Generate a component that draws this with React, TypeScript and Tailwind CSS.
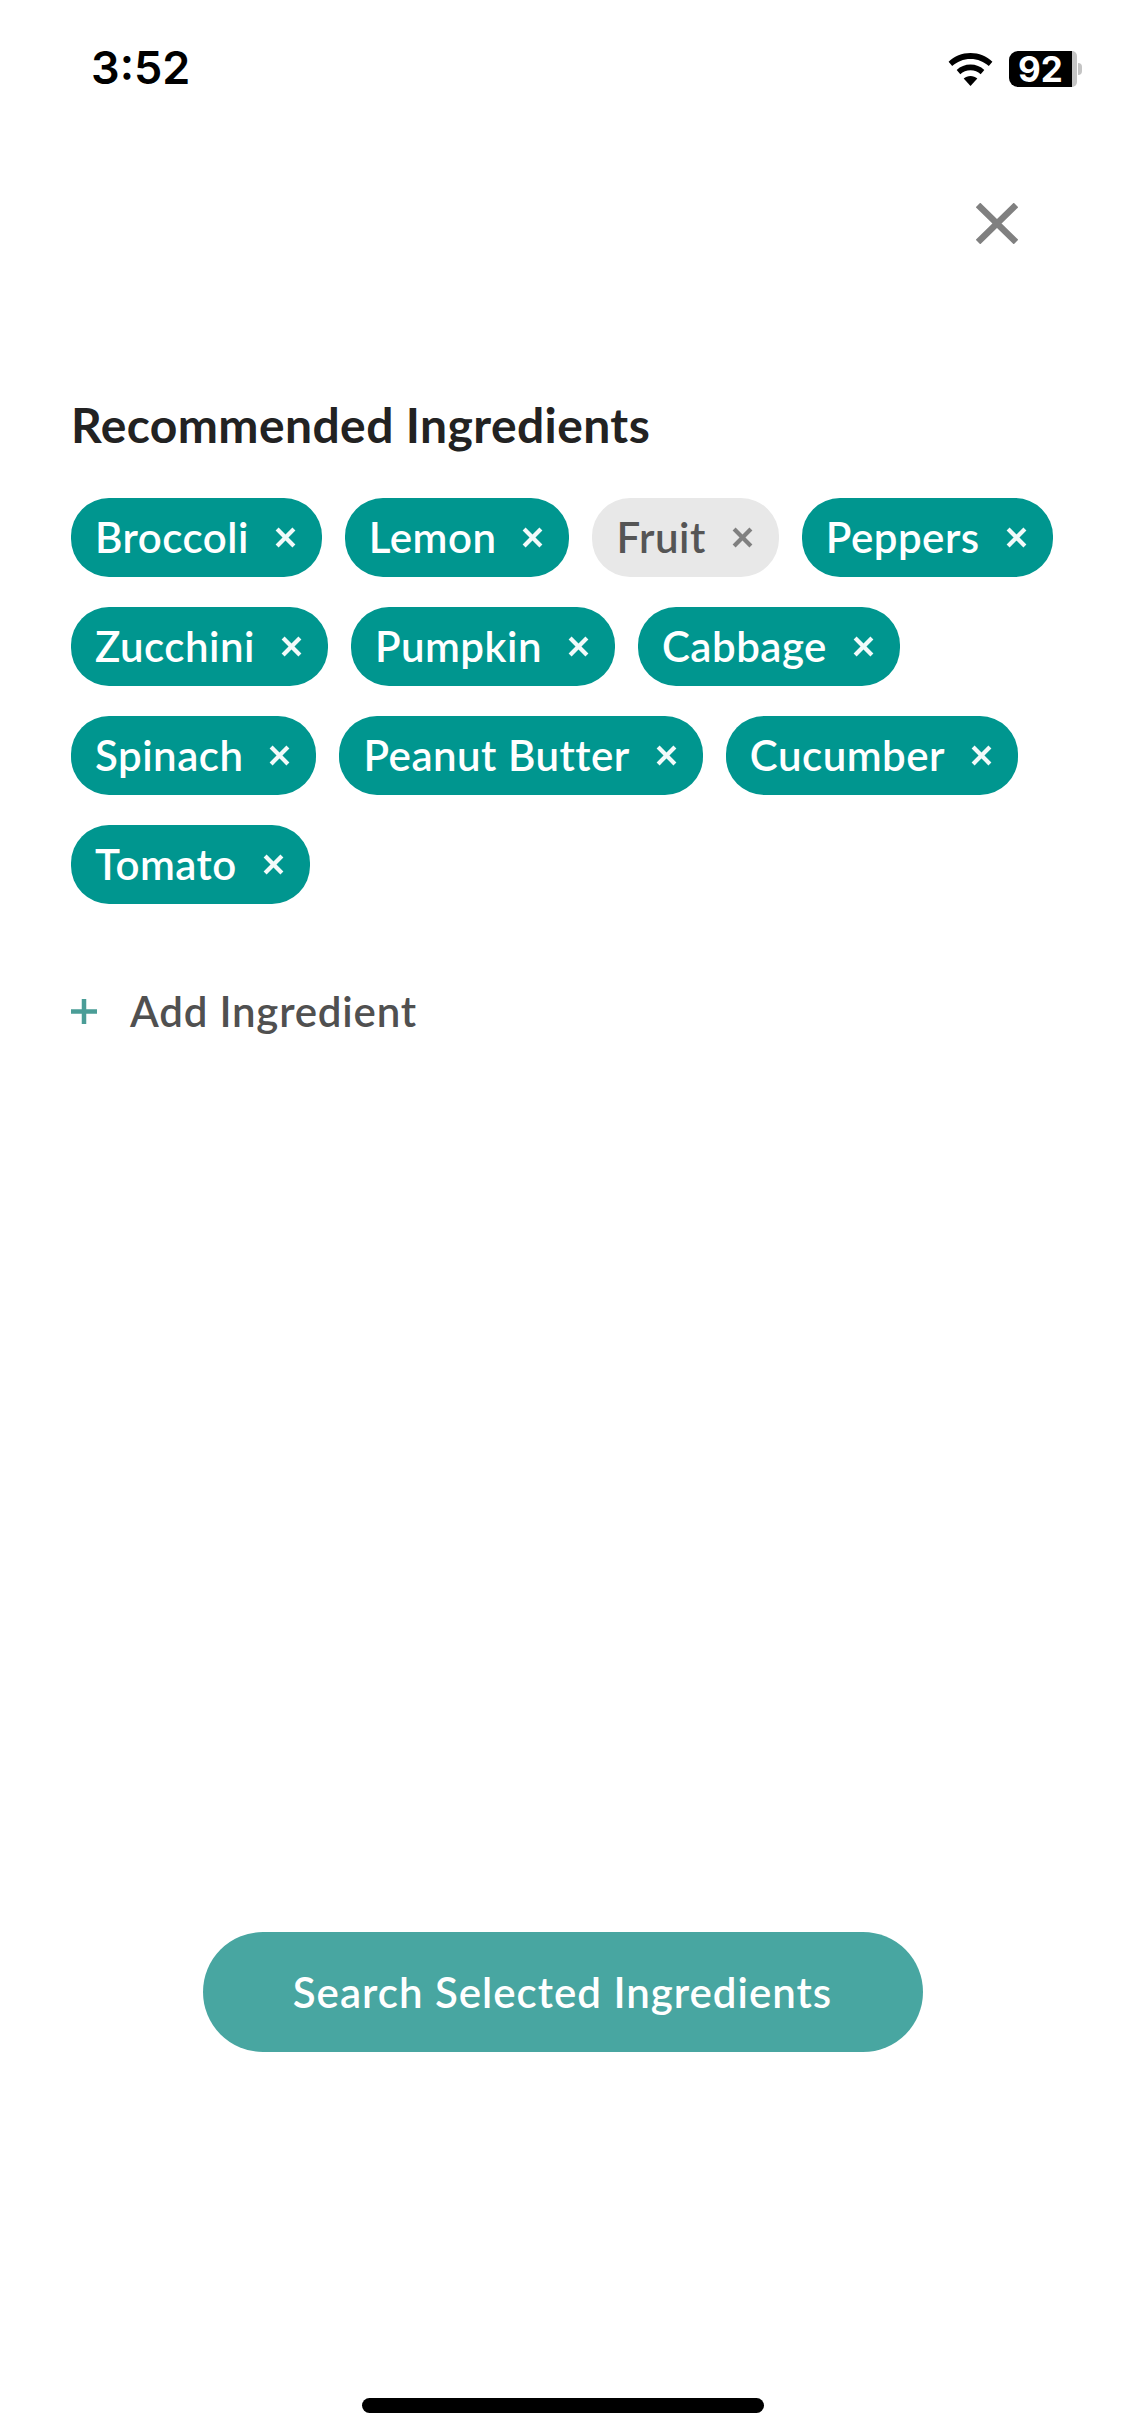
const ingredients = [
  { name: "Broccoli", on: true },
  { name: "Lemon", on: true },
  { name: "Fruit", on: false },
  { name: "Peppers", on: true },
  { name: "Zucchini", on: true },
  { name: "Pumpkin", on: true },
  { name: "Cabbage", on: true },
  { name: "Spinach", on: true },
  { name: "Peanut Butter", on: true },
  { name: "Cucumber", on: true },
  { name: "Tomato", on: true },
]

function Cross({ className }: { className: string }) {
  return (
    <svg className={className} viewBox="0 0 20 20" fill="none" stroke="currentColor" strokeWidth={4}>
      <path d="M2 2L18 18M18 2L2 18" />
    </svg>
  )
}

function Chip({ name, on }: { name: string; on: boolean }) {
  return (
    <div
      className={`flex h-[79px] items-center rounded-[38px] pl-6 pr-[26px] text-[42px] font-semibold tracking-[0.5px] ${
        on ? "bg-[#00968f] text-white" : "bg-[#e8e8e8] text-[#555555]"
      }`}
    >
      <span className="pb-[2px] leading-none">{name}</span>
      <Cross className={`ml-[26px] h-[21px] w-[21px] ${on ? "text-[#f2fafa]" : "text-[#808080]"}`} />
    </div>
  )
}

export default function App() {
  return (
    <div className="flex h-[2436px] w-[1125px] flex-col bg-white font-['Lato',sans-serif]">
      {/* status bar */}
      <div className="flex h-[136px] items-start justify-between pl-[91px] pr-[43px] pt-[41px]">
        <span className="font-['Inter',sans-serif] text-[45px] font-semibold leading-[54px] text-black">3:52</span>
        <div className="flex items-center gap-4 pt-[10px]">
          <svg className="h-[33px] w-[45px]" viewBox="0 0 45 33" fill="black">
            <path d="M22.5 0C14 0 6.4 3.3 0.6 8.7L4.2 13C9 8.6 15.4 5.9 22.5 5.9S36 8.6 40.8 13L44.4 8.7C38.6 3.3 31 0 22.5 0Z" />
            <path d="M22.5 11.5C17.2 11.5 12.4 13.5 8.7 16.9L12.3 21.2C15 18.8 18.6 17.3 22.5 17.3S30 18.8 32.7 21.2L36.3 16.9C32.6 13.5 27.8 11.5 22.5 11.5Z" />
            <path d="M22.5 23C19.9 23 17.5 24 15.7 25.5L22.5 33L29.3 25.5C27.5 24 25.1 23 22.5 23Z" />
          </svg>
          <div className="flex items-center">
            <div className="flex h-9 w-[63px] items-center justify-center rounded-l-[9px] bg-black font-['Inter',sans-serif] text-[35px] font-bold leading-none text-white">
              92
            </div>
            <div className="h-9 w-[5px] rounded-r-[9px] bg-[#c4c4c4]" />
            <div className="ml-px h-3 w-1 rounded-r-full bg-[#c4c4c4]" />
          </div>
        </div>
      </div>

      {/* close */}
      <div className="flex justify-end pr-[107px] pt-[67px]">
        <svg className="h-[41px] w-[42px] text-[#808080]" viewBox="0 0 42 41" fill="none" stroke="currentColor" strokeWidth={6.5}>
          <path d="M2 2L40 39M40 2L2 39" />
        </svg>
      </div>

      <div className="px-[71px] pt-[153px]">
        <h1 className="text-[48px] font-bold leading-[56px] tracking-[0.4px] text-[#222222]">Recommended Ingredients</h1>

        <div className="mt-[45px] flex flex-wrap gap-x-[23px] gap-y-[30px]">
          {ingredients.map((item) => (
            <Chip key={item.name} name={item.name} on={item.on} />
          ))}
        </div>

        <div className="mt-[82px] flex items-center">
          <svg className="h-[25px] w-[26px] text-[#4a9d97]" viewBox="0 0 26 25" fill="none" stroke="currentColor" strokeWidth={4.5}>
            <path d="M0 12.5H26M13 0V25" />
          </svg>
          <span className="ml-[33px] text-[42px] font-semibold leading-[50px] tracking-[0.8px] text-[#505050]">Add Ingredient</span>
        </div>
      </div>

      {/* bottom */}
      <div className="mt-auto flex flex-col items-center">
        <button className="flex h-[120px] w-[720px] items-center justify-center rounded-full bg-[#48a6a1] text-[42px] font-semibold tracking-[1px] text-white">
          Search Selected Ingredients
        </button>
        <div className="mb-[23px] mt-[346px] h-[15px] w-[402px] rounded-full bg-black" />
      </div>
    </div>
  )
}
